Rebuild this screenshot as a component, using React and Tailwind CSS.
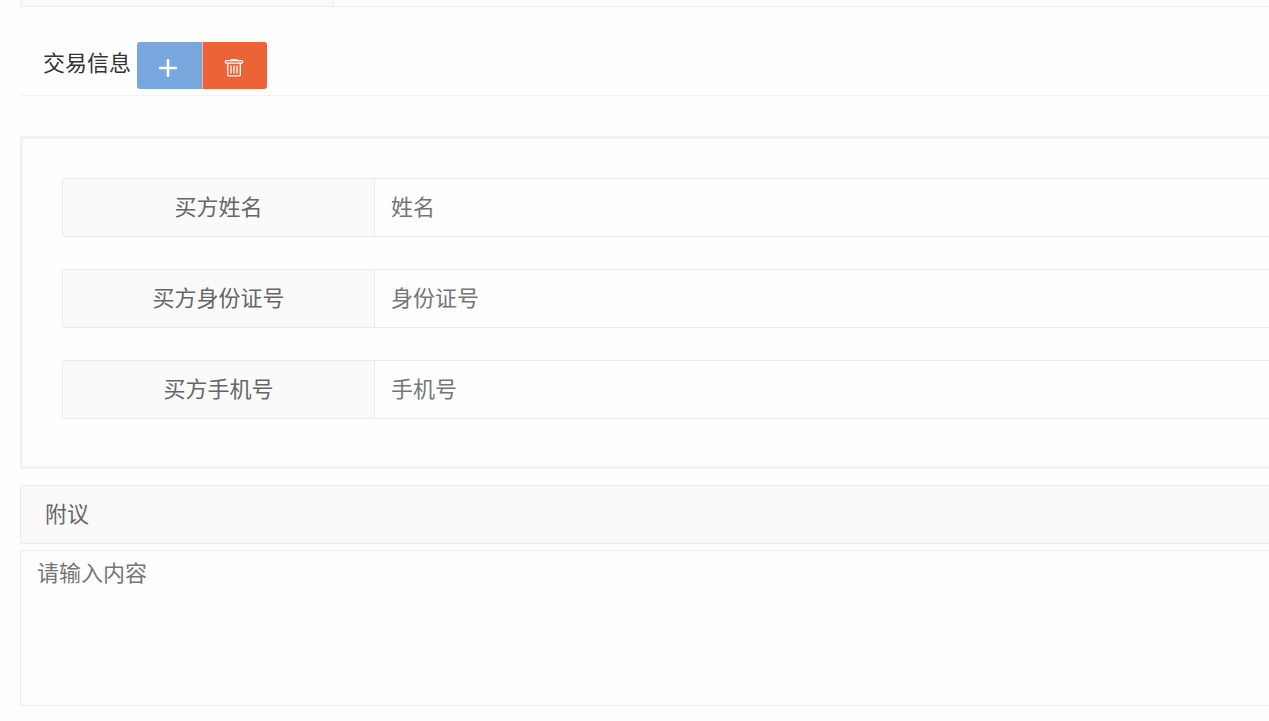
import React, { useState } from "react";

const buyerFields = [
  { name: "buyerName", label: "买方姓名", placeholder: "姓名" },
  { name: "buyerIdCard", label: "买方身份证号", placeholder: "身份证号" },
  { name: "buyerPhone", label: "买方手机号", placeholder: "手机号" },
];

const PlusIcon = () => (
  <svg
    className="w-5 h-5"
    viewBox="0 0 20 20"
    fill="none"
    stroke="currentColor"
    strokeWidth="2.6"
    strokeLinecap="round"
    aria-hidden="true"
  >
    <path d="M10 2.2v15.6M2.2 10h15.6" />
  </svg>
);

const TrashIcon = () => (
  <svg
    className="w-5 h-5"
    viewBox="0 0 20 20"
    fill="none"
    stroke="currentColor"
    strokeWidth="1.3"
    strokeLinecap="round"
    strokeLinejoin="round"
    aria-hidden="true"
  >
    <path d="M7.4 1.9h5.2" strokeWidth="1.8" />
    <rect x="1.3" y="2.6" width="17.4" height="2.5" rx="1" />
    <path d="M3.7 5.2v11.9q0 .8.8.8h11q.8 0 .8-.8V5.2" />
    <path d="M7 7.8v7.2M10 7.8v7.2M13 7.8v7.2" />
  </svg>
);

const FormRow = ({ name, label, placeholder }) => {
  const [value, setValue] = useState("");

  return (
    <div className="flex h-[59px] border border-r-0 border-[#ebebeb] rounded-l-[3px]">
      <label
        htmlFor={name}
        className="w-[312px] shrink-0 flex items-center justify-center pb-1.5 bg-[#fafafa] border-r border-[#ebebeb] text-[#666]"
      >
        {label}
      </label>
      <input
        id={name}
        name={name}
        type="text"
        value={value}
        placeholder={placeholder}
        onChange={(e) => setValue(e.target.value)}
        className="flex-1 min-w-0 px-4 pb-1.5 bg-[#fefefe] text-[#333] placeholder:text-[#757575] outline-none"
      />
    </div>
  );
};

const App = () => {
  const [remark, setRemark] = useState("");

  return (
    <div className="min-h-screen bg-[#fefefe] pl-5 pb-3 text-[22px] leading-8 font-['Noto_Sans_CJK_SC',sans-serif]">
      {/* End of the previous row */}
      <div className="flex h-[7px] border-l border-b border-[#ebebeb] rounded-bl-[3px]">
        <div className="w-[313px] bg-[#fafafa] border-r border-[#ebebeb]" />
      </div>

      <section className="mt-6">
        <div className="flex items-start h-[65px] pt-[11px] pl-[23px] gap-1.5 border-b border-[#f4f4f4]">
          <h2 className="leading-[38px] text-[#333]">交易信息</h2>
          <div className="flex text-white">
            <button
              type="button"
              aria-label="添加"
              className="w-[65px] h-[47px] pt-1 pr-1 flex items-center justify-center bg-[#78a7dd] rounded-l-[3px] cursor-pointer"
            >
              <PlusIcon />
            </button>
            <button
              type="button"
              aria-label="删除"
              className="w-[65px] h-[47px] pt-1 pr-0.5 flex items-center justify-center bg-[#eb6337] border-l border-[#f5b19b] rounded-r-[3px] cursor-pointer"
            >
              <TrashIcon />
            </button>
          </div>
        </div>

        <div className="mt-10 pt-[39px] pb-[47px] pl-[39px] flex flex-col gap-8 border-3 border-r-0 border-[#f2f3f4]">
          {buyerFields.map((field) => (
            <FormRow key={field.name} {...field} />
          ))}
        </div>
      </section>

      <section className="mt-4">
        <label
          htmlFor="remark"
          className="flex items-center h-[59px] pl-6 pb-1.5 bg-[#fafafa] border border-r-0 border-[#ebebeb] rounded-l-[3px] text-[#666]"
        >
          附议
        </label>
        <textarea
          id="remark"
          value={remark}
          placeholder="请输入内容"
          onChange={(e) => setRemark(e.target.value)}
          className="block w-full h-[156px] mt-1.5 px-4 py-1 bg-[#fefefe] border border-r-0 border-[#ebebeb] rounded-l-[3px] text-[#333] placeholder:text-[#757575] resize-none outline-none"
        />
      </section>
    </div>
  );
};

export default App;
